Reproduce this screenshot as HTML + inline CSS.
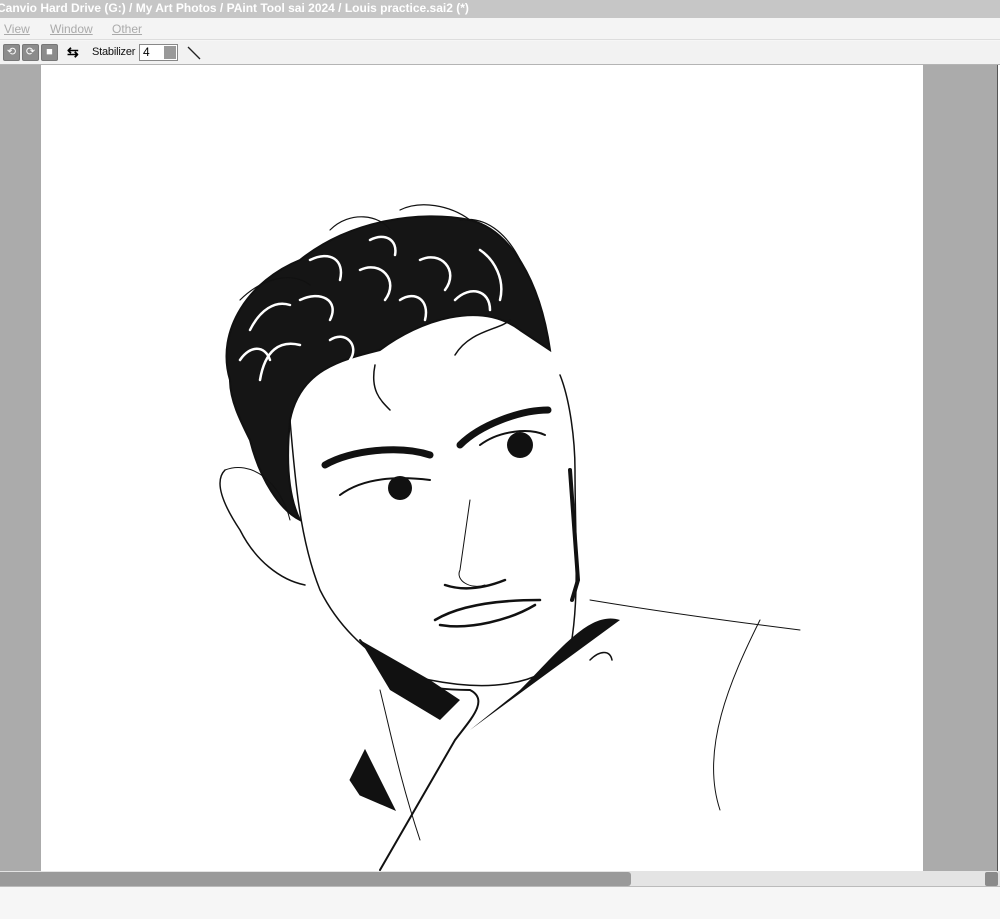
<!DOCTYPE html>
<html><head><meta charset="utf-8"><style>
*{margin:0;padding:0;box-sizing:border-box}
body{width:1000px;height:919px;overflow:hidden;background:#f6f6f6;font-family:Tahoma,"Liberation Sans",sans-serif;position:relative}
.title{position:absolute;left:0;top:0;width:1000px;height:18px;background:#c6c6c6;color:#fff;font-size:12px;font-weight:bold;line-height:17px;white-space:nowrap;text-indent:-3px}
.menu{position:absolute;left:0;top:18px;width:1000px;height:22px;background:#f4f4f4;border-bottom:1px solid #ddd;font-size:12px;color:#aaa;line-height:22px}
.menu span{position:absolute;text-decoration:underline;text-decoration-thickness:1px}
.tool{position:absolute;left:0;top:41px;width:1000px;height:24px;background:#f2f2f2;border-bottom:1px solid #b4b4b4}
.b{position:absolute;top:3px;width:17px;height:17px;background:#8c8c8c;border:1px solid #777;border-radius:2px;color:#fff;font-size:11px;text-align:center;line-height:15px}
.lbl{position:absolute;left:92px;top:5px;font-size:11px;color:#111;letter-spacing:-0.2px}
.sel{position:absolute;left:139px;top:3px;width:39px;height:17px;background:#fff;border:1px solid #888;font-size:12px;line-height:15px;padding-left:3px}
.sel i{position:absolute;right:1px;top:1px;width:12px;height:13px;background:#999}
.gl{position:absolute;left:0;top:65px;width:41px;height:806px;background:#ababab}
.gr{position:absolute;left:923px;top:65px;width:74px;height:806px;background:#ababab}
.edge{position:absolute;left:997px;top:65px;width:3px;height:806px;background:#fff;border-left:1px solid #555}
.cv{position:absolute;left:41px;top:65px;width:882px;height:806px;background:#fff;overflow:hidden}
.track{position:absolute;left:0;top:871px;width:1000px;height:16px;background:#e4e4e4;border-bottom:1px solid #bbb}
.thumb{position:absolute;left:0;top:872px;width:631px;height:14px;background:#9a9a9a;border-radius:0 3px 3px 0}
.arr{position:absolute;left:985px;top:872px;width:13px;height:14px;background:#8a8a8a;border-radius:2px}
</style></head><body>
<div class="title">Canvio Hard Drive (G:) / My Art Photos / PAint Tool sai 2024 / Louis practice.sai2 (*)</div>
<div class="menu"><span style="left:4px">View</span><span style="left:50px">Window</span><span style="left:112px">Other</span></div>
<div class="tool">
<div class="b" style="left:3px">⟲</div><div class="b" style="left:22px">⟳</div><div class="b" style="left:41px">■</div>
<div style="position:absolute;left:67px;top:3px;font-size:14px;font-weight:bold">⇆</div>
<div class="lbl">Stabilizer</div><div class="sel">4<i></i></div>
<svg style="position:absolute;left:186px;top:4px" width="16" height="16"><line x1="2" y1="2" x2="14" y2="14" stroke="#222" stroke-width="1.3"/></svg>
</div>
<div class="gl"></div><div class="gr"></div><div class="edge"></div>
<div class="cv">
<svg width="882" height="806" viewBox="41 65 882 806" fill="none" stroke="#111" stroke-linecap="round">
<path d="M230 380 C215 330 250 280 300 260 C350 220 420 210 470 220 C510 230 540 280 550 350 L520 330 C480 300 420 320 380 350 C340 360 300 370 290 420 C285 470 290 500 300 520 C280 510 260 480 250 440 C240 420 230 400 230 380Z" fill="#151515" stroke-width="2"/>
<g stroke="#fff" stroke-width="2.5">
<path d="M300 300 C320 290 340 300 330 320 M360 270 C380 260 400 280 385 300 M420 260 C440 250 460 270 445 290 M330 340 C345 330 360 345 350 360"/>
<path d="M250 330 C260 310 275 300 290 305 M260 380 C265 350 280 340 300 345 M480 250 C495 260 505 280 500 300 M400 300 C415 290 430 300 425 320 M310 260 C330 250 345 260 340 280 M455 300 C470 285 490 290 490 310"/>
<path d="M240 360 C250 345 265 345 270 360 M370 240 C385 232 398 240 395 255"/>
</g>
<path d="M240 300 C260 280 290 270 310 285 M330 230 C350 210 380 215 390 230 M400 210 C420 200 450 205 470 220 M460 220 C490 215 510 240 520 260" stroke-width="1.2"/>
<path d="M455 355 C470 330 500 330 510 320 M375 365 C370 390 380 400 390 410" stroke-width="1.5"/>
<path d="M290 420 C295 480 300 540 320 590 C340 630 380 670 430 680 C480 690 540 690 570 650 C580 600 575 540 575 470 C575 440 570 400 560 375" stroke-width="1.5"/>
<path d="M570 470 L578 580 L572 600" stroke-width="4"/>
<path d="M325 465 C350 450 400 445 430 455" stroke-width="7"/>
<path d="M460 445 C480 425 520 410 548 410" stroke-width="7"/>
<circle cx="400" cy="488" r="12" fill="#111" stroke="none"/>
<circle cx="520" cy="445" r="13" fill="#111" stroke="none"/>
<path d="M340 495 C360 480 390 475 430 480 M480 445 C500 430 530 428 545 435" stroke-width="2"/>
<path d="M445 585 C460 590 480 590 505 580 M435 620 C460 605 500 600 540 600 M440 625 C470 630 510 620 535 605" stroke-width="2.5"/>
<path d="M470 500 L460 570 C455 580 470 590 485 585" stroke-width="1"/>
<path d="M225 470 C215 480 220 500 240 530 C255 560 280 580 305 585" stroke-width="1.5"/>
<path d="M225 470 C250 460 280 480 290 520" stroke-width="1"/>
<path d="M360 640 C390 680 420 690 470 690 C490 700 470 720 455 740 L380 870" stroke-width="2"/>
<path d="M520 690 C560 650 590 610 620 620 L470 730 Z" fill="#111" stroke="none"/>
<path d="M360 640 L390 690 L440 720 L460 700 L430 680 Z" fill="#111" stroke="none"/>
<path d="M350 780 L365 750 L395 810 L360 795 Z" fill="#111" stroke-width="1"/>
<path d="M590 600 C650 610 720 620 800 630 M760 620 C730 680 700 750 720 810 M380 690 C390 730 400 780 420 840" stroke-width="1"/>
<path d="M590 660 C600 650 610 650 612 660" stroke-width="1.5"/>
</svg>
</div>
<div class="track"></div><div class="thumb"></div><div class="arr"></div>
</body></html>
